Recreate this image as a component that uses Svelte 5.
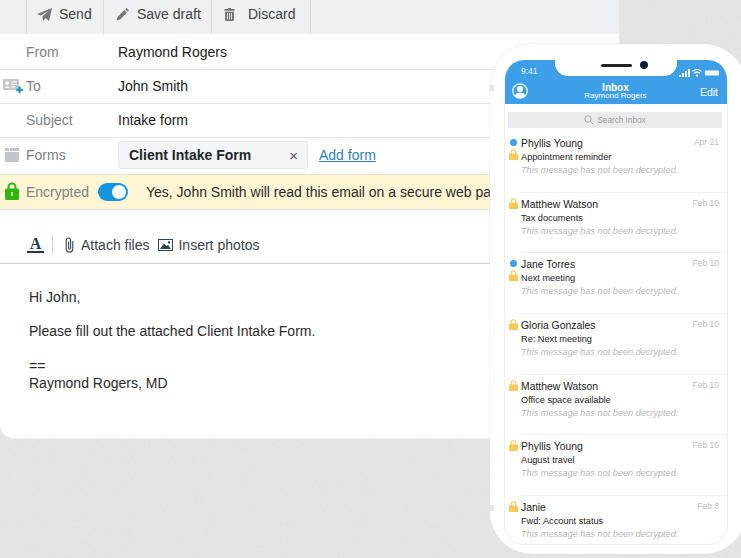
<script>
	const messages = [
		{ name: 'Phyllis Young', subject: 'Appointment reminder', date: 'Apr 21', unread: true },
		{ name: 'Matthew Watson', subject: 'Tax documents', date: 'Feb 10' },
		{ name: 'Jane Torres', subject: 'Next meeting', date: 'Feb 10', unread: true },
		{ name: 'Gloria Gonzales', subject: 'Re: Next meeting', date: 'Feb 10' },
		{ name: 'Matthew Watson', subject: 'Office space available', date: 'Feb 10' },
		{ name: 'Phyllis Young', subject: 'August travel', date: 'Feb 10' },
		{ name: 'Janie', subject: 'Fwd: Account status', date: 'Feb 8' }
	];
</script>

<div class="page">
	<svg class="texture" width="741" height="558">
		<filter id="grain">
			<feTurbulence type="fractalNoise" baseFrequency="0.35" numOctaves="2" seed="4" />
			<feColorMatrix values="0 0 0 0 0.5  0 0 0 0 0.5  0 0 0 0 0.5  0 0 0 0.14 -0.04" />
		</filter>
		<rect width="741" height="558" filter="url(#grain)" />
	</svg>

	<section class="mail">
		<div class="toolbar">
			<button class="tool send">
				<svg width="15" height="13" viewBox="0 0 15 13"><path d="M15 0 L12 13 L8.6 10 L6.2 13 L5.4 8.6 L11.5 3 L3.6 7.6 L0 6 Z" fill="#74787a" /></svg>
				Send
			</button>
			<button class="tool draft">
				<svg width="13" height="13" viewBox="0 0 14 14"><path d="M.6 13.4 L1.6 9.6 L9 2.2 L11.8 5 L4.4 12.4 Z M9.9 1.3 L11 .4 Q11.6 0 12.2 .5 L13.5 1.8 Q14 2.4 13.6 3 L12.7 4.1 Z" fill="#74787a" /></svg>
				Save draft
			</button>
			<button class="tool discard">
				<svg width="11" height="13" viewBox="0 0 12 14"><path d="M4 1 L4.6 0 H7.4 L8 1 H11.5 V3 H.5 V1 Z M1.2 4 H10.8 V12.6 Q10.8 14 9.4 14 H2.6 Q1.2 14 1.2 12.6 Z" fill="#6c7072" /><path d="M3.8 5.4 V12.4 M6 5.4 V12.4 M8.2 5.4 V12.4" stroke="#eef0f1" fill="none" /></svg>
				Discard
			</button>
		</div>

		<div class="row from">
			<span class="label">From</span>
			<span class="value">Raymond Rogers</span>
		</div>
		<div class="row to">
			<svg class="lead-icon card" width="20" height="15" viewBox="0 0 20 15">
				<rect x="0" y="0" width="16" height="11" rx="1" fill="#c3c7c9" />
				<circle cx="4.2" cy="4" r="1.8" fill="#fff" /><path d="M1.6 9 Q4.2 5 6.8 9 Z" fill="#fff" />
				<path d="M8.5 3 H14 M8.5 5.5 H14 M8.5 8 H12" stroke="#fff" />
				<path d="M16.5 7.5 V14 M13.3 10.8 H19.7" stroke="#1b95d8" stroke-width="2.2" />
			</svg>
			<span class="label">To</span>
			<span class="value">John Smith</span>
		</div>
		<div class="row subject">
			<span class="label">Subject</span>
			<span class="value">Intake form</span>
		</div>
		<div class="row forms">
			<svg class="lead-icon" width="14" height="14" viewBox="0 0 14 14">
				<path d="M0 0 H4 V3 H0 Z M5 0 H14 V3 H5 Z" fill="#c0c5c9" /><rect y="4" width="14" height="10" fill="#c0c5c9" />
			</svg>
			<span class="label">Forms</span>
			<div class="chip"><b>Client Intake Form</b><span class="close">×</span></div>
			<a class="add" href="#add">Add form</a>
		</div>
		<div class="row encrypted">
			<svg class="lead-icon lock" width="14" height="18" viewBox="0 0 14 18">
				<path d="M3.5 8 V5 a3.5 3.5 0 0 1 7 0 V8" fill="none" stroke="#2fb50f" stroke-width="2" />
				<rect y="6.5" width="14" height="11.5" rx="1.5" fill="#2fb50f" />
				<rect x="6.2" y="10" width="1.6" height="4" fill="#d8f0c8" />
			</svg>
			<span class="label">Encrypted</span>
			<span class="toggle"><i></i></span>
			<span class="notice">Yes, John Smith will read this email on a secure web page.</span>
		</div>

		<div class="format">
			<span class="font-a">A</span>
			<span class="divider"></span>
			<svg class="clip" width="9" height="16" viewBox="0 0 9 16"><path d="M7.8 4 V11.8 a3.3 3.3 0 0 1 -6.6 0 V3.2 a2.2 2.2 0 0 1 4.4 0 V11 a1 1 0 0 1 -2 0 V4.5" fill="none" stroke="#3f5160" stroke-width="1.2" /></svg>
			<span class="attach">Attach files</span>
			<svg class="photo" width="15" height="12" viewBox="0 0 15 12">
				<rect x=".5" y=".5" width="14" height="11" fill="#fff" stroke="#2e4250" />
				<path d="M2 10 L6 4.5 L8.5 7 L10 6 L13 10 Z" fill="#2e4250" /><circle cx="11" cy="3.4" r="1.2" fill="#2e4250" />
			</svg>
			<span>Insert photos</span>
		</div>

		<div class="body">
			<p>Hi John,</p>
			<p>Please fill out the attached Client Intake Form.</p>
			<p class="sig">==<br />Raymond Rogers, MD</p>
		</div>
	</section>

	<aside class="phone">
		<span class="side-btn top-btn"></span>
		<span class="side-btn low-btn"></span>
		<div class="screen">
			<header class="phone-head">
				<div class="status">
					<span class="time">9:41</span>
					<div class="notch"><span class="speaker"></span><span class="camera"></span></div>
					<svg class="signal" width="41" height="9" viewBox="0 0 41 9">
						<path d="M0 7 h2 v2 h-2 Z M3 5 h2 v4 h-2 Z M6 3 h2 v6 h-2 Z M9 1 h2 v8 h-2 Z" fill="#fff" />
						<path d="M13.5 3.4 Q18 -.4 22.5 3.4 M15 5.4 Q18 3 21 5.4" fill="none" stroke="#fff" stroke-width="1.2" /><circle cx="18" cy="7.6" r="1.1" fill="#fff" />
						<rect x="26" y="2.5" width="14" height="5" rx="1" fill="#fff" />
					</svg>
				</div>
				<div class="nav">
					<svg class="avatar" width="16" height="16" viewBox="0 0 16 16">
						<circle cx="8" cy="8" r="7.2" fill="none" stroke="#fff" stroke-width="1.2" />
						<circle cx="8" cy="6" r="3" fill="#fff" /><path d="M3 13 Q3.5 9.5 8 9.5 Q12.5 9.5 13 13 Q8 16.5 3 13 Z" fill="#fff" />
					</svg>
					<div class="title"><b>Inbox</b><span>Raymond Rogers</span></div>
					<span class="edit">Edit</span>
				</div>
			</header>
			<div class="search">
				<svg width="10" height="10" viewBox="0 0 10 10"><circle cx="4" cy="4" r="3.2" fill="none" stroke="#a8a8ac" /><path d="M6.4 6.4 L9.4 9.4" stroke="#a8a8ac" /></svg>
				Search Inbox
			</div>
			<ul class="list">
				{#each messages as m}
					<li class="msg">
						<div class="marks">
							{#if m.unread}<span class="dot"></span>{/if}
							<svg width="9" height="11" viewBox="0 0 10 12">
								<path d="M2.4 6 V3.4 a2.6 2.6 0 0 1 5.2 0 V6" fill="none" stroke="#f7c65b" stroke-width="1.2" />
								<rect y="5" width="10" height="7" rx=".8" fill="#f9c859" />
							</svg>
						</div>
						<div class="text">
							<div class="top"><span class="name">{m.name}</span><span class="date">{m.date}</span></div>
							<div class="subj">{m.subject}</div>
							<div class="preview">This message has not been decrypted.</div>
						</div>
					</li>
				{/each}
			</ul>
		</div>
	</aside>
</div>

<style>
	:global(body) { margin: 0; background: #e4e4e4; }
	.page { position: relative; width: 741px; height: 558px; overflow: hidden; font-family: 'Liberation Sans', Arial, sans-serif; background: #e5e5e5; }
	.texture { position: absolute; left: 0; top: 0; }

	.mail { position: relative; width: 619px; height: 438px; background: #fff; border-bottom-left-radius: 14px; box-shadow: 0 1px 1px #ededed; overflow: hidden; font-size: 14px; color: #222; }
	.toolbar { display: flex; box-sizing: border-box; height: 34px; padding-left: 26px; background: #eef0f1; }
	.tool { display: flex; align-items: center; box-sizing: border-box; border: 0; border-left: 1px solid #d8dcde; background: none; padding: 0 0 6px; font: inherit; color: #3f4244; }
	.send { width: 77px; padding-left: 10px; gap: 7px; }
	.draft { width: 108px; padding-left: 12px; gap: 8px; }
	.discard { width: 100px; padding-left: 12px; gap: 13px; border-right: 1px solid #d8dcde; }

	.row { position: relative; display: flex; align-items: center; box-sizing: border-box; height: 34px; padding: 0 0 2px 26px; border-bottom: 1px solid #e3e5e6; }
	.from { height: 36px; padding-bottom: 0; }
	.forms { height: 37px; border-bottom: 1px solid #e6e3d6; }
	.encrypted { height: 35px; padding-bottom: 0; background: #fdf5d3; border-bottom: 1px solid #e3e2da; white-space: nowrap; }
	.label { width: 92px; color: #7c8285; flex: none; }
	.value { color: #1a1a1a; }
	.lead-icon { position: absolute; left: 5px; top: 10px; }
	.card { left: 3px; top: 9px; }
	.lock { top: 7px; }

	.chip { display: flex; align-items: center; justify-content: space-between; box-sizing: border-box; width: 190px; height: 28px; padding: 0 9px 0 10px; background: #f2f4f6; border: 1px solid #e4e7ea; border-radius: 3px; color: #20262b; }
	.close { font-size: 15px; color: #555; }
	.add { margin-left: 11px; color: #2e80bd; text-decoration: underline; }

	.encrypted .label { width: 72px; }
	.toggle { display: flex; justify-content: flex-end; align-items: center; box-sizing: border-box; width: 30px; height: 18px; padding: 2px; border-radius: 9px; background: #1295e0; flex: none; }
	.toggle i { width: 14px; height: 14px; border-radius: 50%; background: #fff; }
	.notice { margin-left: 18px; color: #2a2a2a; }

	.format { display: flex; align-items: center; box-sizing: border-box; height: 54px; padding: 16px 0 0 27px; border-bottom: 1px solid #c9cbcc; color: #39434a; }
	.font-a { font-family: 'Liberation Serif', serif; font-weight: 700; font-size: 16px; line-height: 15px; color: #1f3b52; border-bottom: 2px solid #1f3b52; width: 17px; text-align: center; }
	.divider { width: 1px; height: 19px; background: #d4d6d8; margin: 0 12px 0 8px; }
	.attach { margin: 0 9px 0 7px; }
	.photo { margin-right: 5px; }

	.body { padding: 25px 29px 0; color: #2a2a2a; line-height: 17px; }
	.body p { margin: 0 0 17px; }
	.body .sig { padding-top: 1px; }

	.phone { position: absolute; left: 490px; top: 44px; width: 256px; height: 510px; box-sizing: border-box; padding: 16px 0 0 14px; background: #fff; border-radius: 42px; box-shadow: 0 0 2px #dcdcdc; }
	.side-btn { position: absolute; left: 0; width: 4px; height: 6px; background: #e6e6e6; }
	.top-btn { top: 41px; }
	.low-btn { top: 461px; }
	.screen { box-sizing: border-box; width: 224px; height: 485px; border: 1px solid #eceef0; border-top: 0; border-radius: 20px; overflow: hidden; }
	.phone-head { height: 44px; background: #3d9fe8; color: #fff; }
	.status { position: relative; display: flex; justify-content: space-between; align-items: center; box-sizing: border-box; height: 22px; padding: 0 7px 0 16px; font-size: 8.5px; }
	.signal { margin-top: 2px; }
	.notch { position: absolute; left: 50px; top: 0; display: flex; align-items: center; justify-content: center; gap: 8px; width: 122px; height: 16px; padding: 0 0 6px 17px; box-sizing: border-box; background: #fff; border-radius: 0 0 13px 13px; }
	.speaker { width: 31px; height: 3px; border-radius: 2px; background: #222; }
	.camera { width: 8px; height: 8px; border-radius: 50%; background: #111c2c; }
	.time { color: #e8f4fd; }
	.nav { display: flex; align-items: center; justify-content: space-between; height: 22px; padding: 0 9px 0 7px; }
	.avatar { margin-top: -4px; }
	.title { display: flex; flex-direction: column; align-items: center; font-size: 8px; line-height: 8px; margin: -3px 0 0 3px; }
	.title b { font-size: 10px; line-height: 9px; font-weight: 700; }
	.edit { font-size: 10.5px; margin-top: -2px; }

	.search { display: flex; align-items: center; justify-content: center; gap: 3px; height: 16px; margin: 8px 5px 0 3px; background: #ebebef; color: #9b9ba0; font-size: 8.2px; }

	.list { list-style: none; margin: 4px 0 0; padding: 0; }
	.msg { display: flex; box-sizing: border-box; height: 60.7px; padding-left: 3px; }
	.marks { display: flex; flex-direction: column; align-items: center; width: 10px; box-sizing: border-box; padding-top: 5px; gap: 3px; flex: none; }
	.dot { width: 7px; height: 7px; margin-top: 2px; border-radius: 50%; background: #3d9fe8; }
	.text { box-sizing: border-box; margin-left: 3px; padding: 5px 8px 0 0; flex: 1; border-bottom: 1px solid #f2f2f2; }
	.msg:last-child .text { border-bottom: 0; }
	.top { display: flex; justify-content: space-between; align-items: flex-start; }
	.name { font-size: 10.4px; line-height: 13px; color: #1b1b1b; }
	.date { font-size: 8.5px; line-height: 10px; color: #bdbdbd; }
	.subj { font-size: 9.2px; line-height: 14px; color: #1b1b1b; }
	.preview { font-size: 9.15px; line-height: 13px; font-style: italic; color: #b8b8b8; white-space: nowrap; }
</style>
